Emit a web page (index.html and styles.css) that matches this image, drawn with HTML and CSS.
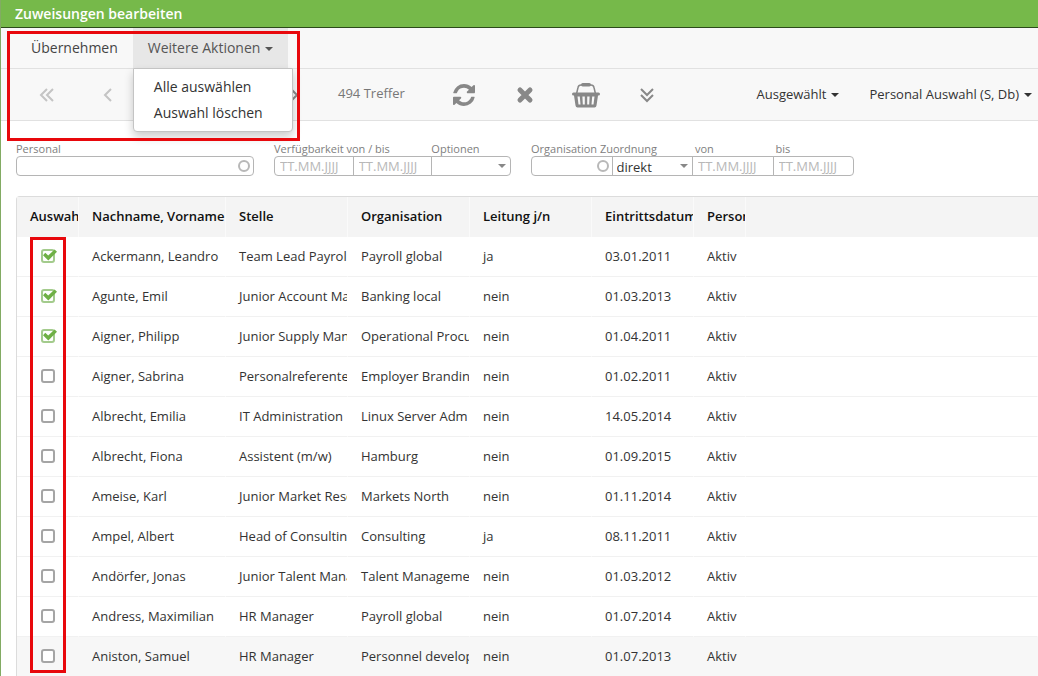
FILE: index.html
```html
<!DOCTYPE html>
<html lang="de">
<head>
<meta charset="utf-8">
<title>Zuweisungen bearbeiten</title>
<link rel="stylesheet" href="styles.css">
</head>
<body>
<svg class="defs" aria-hidden="true">
  <symbol id="tick" viewBox="0 0 14 12"><path d="M0 6.2 2.300 3.800 5.200 6.600 11.600.4 14 2.800 5.300 11.400Z"/></symbol>
</svg>
<div class="window">
  <header class="titlebar"><h1>Zuweisungen bearbeiten</h1></header>

  <nav class="menubar">
    <button class="menu-item">Übernehmen</button>
    <div class="menu-group">
      <button class="menu-item open" aria-expanded="true">Weitere Aktionen<span class="caret"></span></button>
      <div class="dropdown">
        <button>Alle auswählen</button>
        <button>Auswahl löschen</button>
      </div>
    </div>
  </nav>

  <div class="toolbar">
    <button class="tool faded" aria-label="Erste Seite"><svg width="16" height="16" viewBox="0 0 16 16"><path class="line" d="M8 2 2 8l6 6M14 2 8 8l6 6"/></svg></button>
    <button class="tool faded" aria-label="Vorige Seite"><svg width="16" height="16" viewBox="0 0 16 16"><path class="line" d="M11 2 5 8l6 6"/></svg></button>
    <button class="tool next" aria-label="Nächste Seite"><svg width="16" height="16" viewBox="0 0 16 16"><path class="line" d="m5 2 6 6-6 6"/></svg></button>
    <button class="tool" aria-label="Letzte Seite"><svg width="16" height="16" viewBox="0 0 16 16"><path class="line" d="m2 2 6 6-6 6M8 2l6 6-6 6"/></svg></button>
    <span class="hits">494 Treffer</span>
    <button class="tool" aria-label="Aktualisieren"><svg width="22" height="22" viewBox="0 0 1536 1536"><path d="M1511 928q0 5-1 7-64 268-268 434.500T764 1536q-146 0-282.500-55T238 1324l-129 129q-19 19-45 19t-45-19-19-45V960q0-26 19-45t45-19h448q26 0 45 19t19 45-19 45l-137 137q71 66 161 102t187 36q134 0 250-65t186-179q11-17 53-117 8-23 30-23h192q13 0 22.500 9.500t9.500 22.500zm25-800v448q0 26-19 45t-45 19h-448q-26 0-45-19t-19-45 19-45l138-138Q969 256 768 256q-134 0-250 65T332 500q-11 17-53 117-8 23-30 23H50q-13 0-22.500-9.500T18 608v-7q65-268 270-434.500T768 0q146 0 284 55.500T1297 212l130-129q19-19 45-19t45 19 19 45z"/></svg></button>
    <button class="tool" aria-label="Löschen"><svg width="18" height="18" viewBox="0 0 18 18"><path class="cross" d="M4 4l10 10M14 4 4 14"/></svg></button>
    <button class="tool" aria-label="Warenkorb"><svg width="28" height="26" viewBox="0 0 28 26"><path class="handle" d="M4.500 12 6 5.500Q6.500 3 9 3h10q2.500 0 3 2.500L23.500 12"/><rect x="9" y="1" width="10" height="3.500" rx="1.700"/><path fill-rule="evenodd" d="M1.500 10.500h25q1.500 0 1.500 1.500t-1.500 1.500H26L24.500 23.500Q24.200 25.500 22.500 25.500h-17Q3.800 25.500 3.500 23.500L2 13.500H1.500Q0 13.500 0 12t1.500-1.500ZM5.500 14.500l1 8h2l-.7-8ZM10.400 14.500l.4 8h2v-8ZM15.200 14.500v8h2l.4-8ZM20.200 14.500l-.7 8h2l1-8Z"/></svg></button>
    <button class="tool" aria-label="Mehr anzeigen"><svg width="16" height="16" viewBox="0 0 16 16"><path class="line" d="m2 2 6 6 6-6M2 8l6 6 6-6"/></svg></button>
    <div class="views">
      <button>Ausgewählt<span class="caret"></span></button>
      <button>Personal Auswahl (S, Db)<span class="caret"></span></button>
    </div>
  </div>

  <form class="filters">
    <div class="group wide">
      <div class="field lookup"><label for="personal">Personal</label><input id="personal" type="text"><span class="ring"></span></div>
    </div>
    <div class="group">
      <div class="field"><label for="vf">Verfügbarkeit von / bis</label><input id="vf" type="text" placeholder="TT.MM.JJJJ"></div>
      <div class="field"><input aria-label="Verfügbarkeit bis" type="text" placeholder="TT.MM.JJJJ"></div>
      <div class="field choice"><label for="opt">Optionen</label><select id="opt"><option></option></select><span class="caret"></span></div>
    </div>
    <div class="group last">
      <div class="field lookup"><label for="org">Organisation Zuordnung</label><input id="org" type="text"><span class="ring"></span></div>
      <div class="field choice"><select aria-label="Zuordnung"><option>direkt</option></select><span class="caret"></span></div>
      <div class="field indent"><label for="von">von</label><input id="von" type="text" placeholder="TT.MM.JJJJ"></div>
      <div class="field indent"><label for="bis">bis</label><input id="bis" type="text" placeholder="TT.MM.JJJJ"></div>
    </div>
  </form>

  <div class="list">
    <table>
      <colgroup><col class="c-pick"><col class="c-name"><col class="c-mid"><col class="c-mid"><col class="c-mid"><col class="c-date"><col class="c-state"><col></colgroup>
      <thead><tr><th>Auswahl</th><th>Nachname, Vorname</th><th>Stelle</th><th>Organisation</th><th>Leitung j/n</th><th>Eintrittsdatum</th><th>Personalstatus</th><th class="rest"></th></tr></thead>
      <tbody>
        <tr><td><label class="pick"><input type="checkbox" checked aria-label="Ackermann, Leandro"><svg><use href="#tick"/></svg></label></td><td>Ackermann, Leandro</td><td>Team Lead Payroll</td><td>Payroll global</td><td>ja</td><td>03.01.2011</td><td>Aktiv</td><td></td></tr>
        <tr><td><label class="pick"><input type="checkbox" checked aria-label="Agunte, Emil"><svg><use href="#tick"/></svg></label></td><td>Agunte, Emil</td><td>Junior Account Manager</td><td>Banking local</td><td>nein</td><td>01.03.2013</td><td>Aktiv</td><td></td></tr>
        <tr><td><label class="pick"><input type="checkbox" checked aria-label="Aigner, Philipp"><svg><use href="#tick"/></svg></label></td><td>Aigner, Philipp</td><td>Junior Supply Manager</td><td>Operational Procurement</td><td>nein</td><td>01.04.2011</td><td>Aktiv</td><td></td></tr>
        <tr><td><label class="pick"><input type="checkbox" aria-label="Aigner, Sabrina"><svg><use href="#tick"/></svg></label></td><td>Aigner, Sabrina</td><td>Personalreferentent</td><td>Employer Branding</td><td>nein</td><td>01.02.2011</td><td>Aktiv</td><td></td></tr>
        <tr><td><label class="pick"><input type="checkbox" aria-label="Albrecht, Emilia"><svg><use href="#tick"/></svg></label></td><td>Albrecht, Emilia</td><td>IT Administration</td><td>Linux Server Adm</td><td>nein</td><td>14.05.2014</td><td>Aktiv</td><td></td></tr>
        <tr><td><label class="pick"><input type="checkbox" aria-label="Albrecht, Fiona"><svg><use href="#tick"/></svg></label></td><td>Albrecht, Fiona</td><td>Assistent (m/w)</td><td>Hamburg</td><td>nein</td><td>01.09.2015</td><td>Aktiv</td><td></td></tr>
        <tr><td><label class="pick"><input type="checkbox" aria-label="Ameise, Karl"><svg><use href="#tick"/></svg></label></td><td>Ameise, Karl</td><td>Junior Market Research</td><td>Markets North</td><td>nein</td><td>01.11.2014</td><td>Aktiv</td><td></td></tr>
        <tr><td><label class="pick"><input type="checkbox" aria-label="Ampel, Albert"><svg><use href="#tick"/></svg></label></td><td>Ampel, Albert</td><td>Head of Consulting</td><td>Consulting</td><td>ja</td><td>08.11.2011</td><td>Aktiv</td><td></td></tr>
        <tr><td><label class="pick"><input type="checkbox" aria-label="Andörfer, Jonas"><svg><use href="#tick"/></svg></label></td><td>Andörfer, Jonas</td><td>Junior Talent Manager</td><td>Talent Management</td><td>nein</td><td>01.03.2012</td><td>Aktiv</td><td></td></tr>
        <tr><td><label class="pick"><input type="checkbox" aria-label="Andress, Maximilian"><svg><use href="#tick"/></svg></label></td><td>Andress, Maximilian</td><td>HR Manager</td><td>Payroll global</td><td>nein</td><td>01.07.2014</td><td>Aktiv</td><td></td></tr>
        <tr class="hover"><td><label class="pick"><input type="checkbox" aria-label="Aniston, Samuel"><svg><use href="#tick"/></svg></label></td><td>Aniston, Samuel</td><td>HR Manager</td><td>Personnel development</td><td>nein</td><td>01.07.2013</td><td>Aktiv</td><td></td></tr>
      </tbody>
    </table>
    <div class="mark mark-column"></div>
  </div>
  <div class="mark mark-menu"></div>
</div>
</body>
</html>
```
FILE: styles.css
```css
* { box-sizing: border-box; }
body {
  margin: 0;
  font: 13px/20px "Open Sans", "Noto Sans", sans-serif;
  color: #333;
  background: #fff;
}
button, input, select { font: inherit; color: inherit; }
button { padding: 0; border: 0; background: none; white-space: nowrap; }
.defs { display: none; }

.window {
  position: relative;
  height: 100vh;
  overflow: hidden;
  border-left: 1px solid #82ab63;
}
.titlebar {
  padding: 4px 14px 3px;
  background: #76b94a;
  border-bottom: 1px solid #2c4a1b;
}
.titlebar h1 { margin: 0; font-size: 14px; line-height: 20px; font-weight: 600; color: #fff; }

.caret {
  display: inline-block;
  margin-left: 5px;
  vertical-align: middle;
  border: 4px solid transparent;
  border-top-color: currentColor;
  border-bottom: 0;
}

.menubar {
  display: flex;
  height: 41px;
  padding-left: 15px;
  background: #f8f8f8;
  border-bottom: 1px solid #e1e1e1;
  font-size: 14px;
}
.menu-item { height: 40px; padding: 0 15px; color: #444; }
.menu-group { position: relative; }
.menu-item.open { background: #e7e7e7; color: #555; }
.dropdown {
  position: absolute;
  top: 40px;
  left: 0;
  z-index: 2;
  width: 160px;
  padding: 5px 0;
  display: flex;
  flex-direction: column;
  background: #fff;
  border: 1px solid #c4c4c4;
  border-radius: 0 0 4px 4px;
  box-shadow: 0 5px 10px rgba(0, 0, 0, .2);
}
.dropdown button { padding: 0 20px; line-height: 26px; text-align: left; color: #333; }

.toolbar {
  display: flex;
  align-items: center;
  height: 52px;
  padding: 0 6px 0 15px;
  background: #f8f8f8;
  border-bottom: 1px solid #e1e1e1;
}
.tool {
  flex: none;
  display: flex;
  justify-content: center;
  width: 61px;
  padding-top: 1px;
  color: #888;
}
.tool.faded { color: #c4c4c4; }
.tool.next { margin-left: 61px; }
.tool svg { fill: currentColor; }
.tool .line { fill: none; stroke: currentColor; stroke-width: 2; }
.tool .cross { stroke: currentColor; stroke-width: 5; stroke-linecap: round; }
.tool .handle { fill: none; stroke: currentColor; stroke-width: 1.500; }
.hits { width: 112px; padding: 0 0 4px 17px; color: #777; }
.views { display: flex; gap: 30px; margin-left: auto; padding-bottom: 2px; }

.filters { display: flex; gap: 20px; padding: 20px 15px; }
.group { display: flex; width: 237px; }
.group.wide { width: 238px; }
.group.last { width: 323px; }
.field { position: relative; flex: 1; min-width: 0; display: flex; flex-direction: column; justify-content: flex-end; }
.field + .field { margin-left: -1px; }
.field label { font-size: 11px; line-height: 15px; color: #808080; white-space: nowrap; }
.field.indent label { padding-left: 3px; }
.field input, .field select {
  appearance: none;
  width: 100%;
  height: 20px;
  padding: 0 5px;
  border: 1px solid #b5b5b5;
  border-radius: 0;
  background: #fff;
  outline: 0;
}
.field select { padding: 0 4px 2px; }
.field:first-child input { border-radius: 4px 0 0 4px; }
.field:last-child input, .field:last-child select { border-radius: 0 4px 4px 0; }
.field:only-child input { border-radius: 4px; }
.field input::placeholder { color: #b8b8b8; }
.ring {
  position: absolute;
  right: 4px;
  bottom: 4px;
  width: 12px;
  height: 12px;
  border: 2px solid #b8b8b8;
  border-radius: 50%;
}
.field .caret { position: absolute; right: 5px; bottom: 8px; color: #888; }

.list {
  position: relative;
  margin-left: 15px;
  border: 1px solid #dcdcdc;
  border-width: 1px 0 0 1px;
  border-top-left-radius: 4px;
}
table { width: 100%; table-layout: fixed; border-collapse: separate; border-spacing: 0; }
.c-pick { width: 62px; }
.c-name { width: 147px; }
.c-mid { width: 122px; }
.c-date { width: 102px; }
.c-state { width: 52px; }
th, td {
  height: 40px;
  padding: 0 0 2px 13px;
  text-align: left;
  white-space: nowrap;
  overflow: hidden;
  text-overflow: clip;
}
th { background: #f4f4f4; border-right: 1px solid #fafafa; font-weight: 600; color: #111; }
th.rest { border-right: 0; }
td { padding-bottom: 1px; border-bottom: 1px solid #f1f1f1; border-right: 1px solid transparent; }
.hover td { background: #f7f7f7; }

.pick { position: relative; display: block; width: 18px; height: 14px; margin-left: 11px; }
.pick input {
  appearance: none;
  display: block;
  width: 14px;
  height: 14px;
  margin: 0;
  border: 2px solid #a5a5a5;
  border-radius: 3px;
  background: #fff;
}
.pick svg { display: none; position: absolute; left: 2px; top: 0; width: 14px; height: 12px; fill: #6fb045; }
.pick input:checked { border-color: #a3cb8c; }
.pick input:checked + svg { display: block; }

.mark { position: absolute; z-index: 3; border: 3px solid #e8080c; pointer-events: none; }
.mark-menu { left: 6px; top: 31px; width: 293px; height: 110px; }
.mark-column { left: 13px; top: 40px; width: 36px; height: 436px; }
```
